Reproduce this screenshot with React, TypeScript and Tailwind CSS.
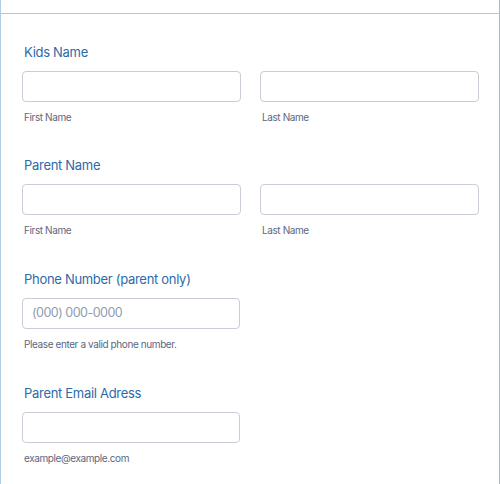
import React from "react";

function Label({ children }: { children: React.ReactNode }) {
  return (
    <div className="pl-[2px] text-[13px] leading-[20px] font-normal tracking-[-0.3px] text-[#2e6aa7]">{children}</div>
  );
}

function Input({ placeholder }: { placeholder?: string }) {
  return (
    <div className="h-[31px] rounded-[4px] border border-[#c9cdd7] bg-white flex items-center px-[9px] text-[12.5px] tracking-[-0.5px] text-[#8f9bb3]">
      {placeholder}
    </div>
  );
}

function Sub({ children }: { children: React.ReactNode }) {
  return <div className="mt-[7px] pl-[2px] text-[10px] leading-[16px] tracking-[-0.4px] text-[#5b6780]">{children}</div>;
}

export default function App() {
  return (
    <div
      className="min-h-[484px] w-[500px] bg-white border-l border-r border-l-[#b3cbe2] border-r-[#a9b8c8]"
      style={{ fontFamily: "Inter, 'Noto Sans', sans-serif" }}
    >
      <div className="h-[13px]" />
      <div className="border-t border-[#b7c7d7] pt-[28px] pl-[21px] pr-[20px]">
        <div>
          <Label>Kids Name</Label>
          <div className="mt-[9px] grid grid-cols-2 gap-[19px]">
            <div>
              <Input />
              <Sub>First Name</Sub>
            </div>
            <div>
              <Input />
              <Sub>Last Name</Sub>
            </div>
          </div>
        </div>
        <div className="mt-[30px]">
          <Label>Parent Name</Label>
          <div className="mt-[9px] grid grid-cols-2 gap-[19px]">
            <div>
              <Input />
              <Sub>First Name</Sub>
            </div>
            <div>
              <Input />
              <Sub>Last Name</Sub>
            </div>
          </div>
        </div>
        <div className="mt-[31px]">
          <Label>Phone Number (parent only)</Label>
          <div className="mt-[9px] w-[218px]">
            <Input placeholder="(000) 000-0000" />
            <Sub>Please enter a valid phone number.</Sub>
          </div>
        </div>
        <div className="mt-[31px]">
          <Label>Parent Email Adress</Label>
          <div className="mt-[9px] w-[218px]">
            <Input />
            <Sub>example@example.com</Sub>
          </div>
        </div>
      </div>
    </div>
  );
}
